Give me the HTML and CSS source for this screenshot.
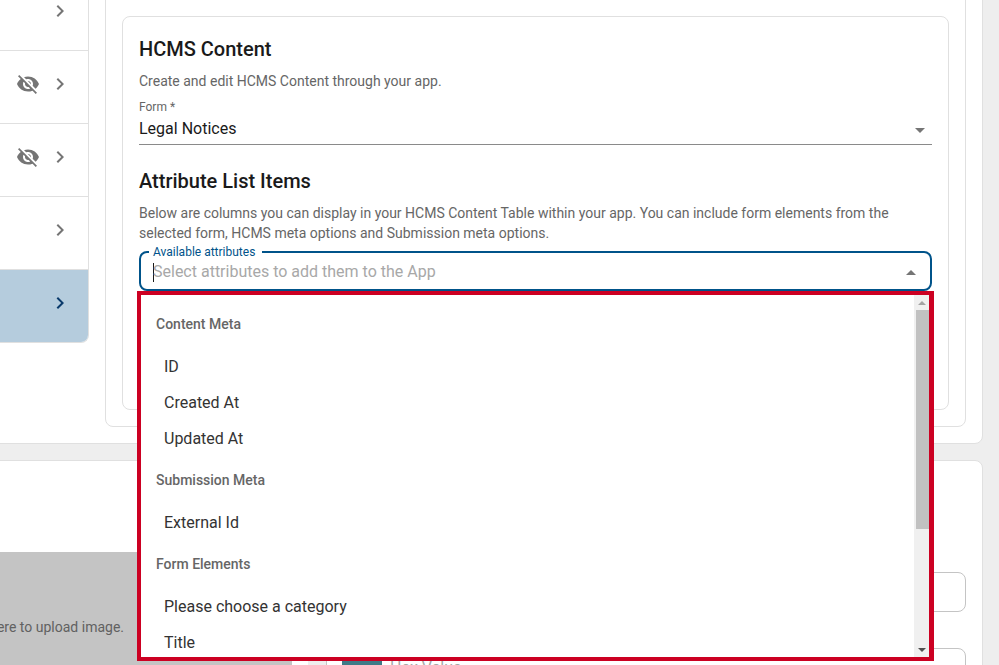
FILE: index.html
```html
<!DOCTYPE html>
<html lang="en">
<head>
<meta charset="utf-8">
<title>HCMS Content</title>
<link rel="stylesheet" href="styles.css">
</head>
<body>
<div class="page">
  <section class="card card-top">
    <nav class="list">
      <div class="row row-first">
        <svg class="chev" viewBox="0 0 24 24"><path d="M10 6 8.59 7.41 13.17 12l-4.58 4.59L10 18l6-6z"/></svg>
      </div>
      <div class="row">
        <svg class="eye" viewBox="0 0 24 24"><path d="M12 7c2.76 0 5 2.24 5 5 0 .65-.13 1.26-.36 1.83l2.92 2.92c1.51-1.26 2.7-2.89 3.43-4.75-1.73-4.39-6-7.5-11-7.5-1.4 0-2.74.25-3.98.7l2.16 2.16C10.74 7.13 11.35 7 12 7zM2 4.27l2.28 2.28.46.46C3.08 8.3 1.78 10.02 1 12c1.73 4.39 6 7.5 11 7.5 1.55 0 3.03-.3 4.38-.84l.42.42L19.73 22 21 20.73 3.27 3 2 4.27zM7.53 9.8l1.55 1.55c-.05.21-.08.43-.08.65 0 1.66 1.34 3 3 3 .22 0 .44-.03.65-.08l1.55 1.55c-.67.33-1.41.53-2.2.53-2.76 0-5-2.24-5-5 0-.79.2-1.53.53-2.2zm4.31-.78l3.15 3.15.02-.16c0-1.66-1.34-3-3-3l-.17.01z"/></svg>
        <svg class="chev" viewBox="0 0 24 24"><path d="M10 6 8.59 7.41 13.17 12l-4.58 4.59L10 18l6-6z"/></svg>
      </div>
      <div class="row">
        <svg class="eye" viewBox="0 0 24 24"><path d="M12 7c2.76 0 5 2.24 5 5 0 .65-.13 1.26-.36 1.83l2.92 2.92c1.51-1.26 2.7-2.89 3.43-4.75-1.73-4.39-6-7.5-11-7.5-1.4 0-2.74.25-3.98.7l2.16 2.16C10.74 7.13 11.35 7 12 7zM2 4.27l2.28 2.28.46.46C3.08 8.3 1.78 10.02 1 12c1.73 4.39 6 7.5 11 7.5 1.55 0 3.03-.3 4.38-.84l.42.42L19.73 22 21 20.73 3.27 3 2 4.27zM7.53 9.8l1.55 1.55c-.05.21-.08.43-.08.65 0 1.66 1.34 3 3 3 .22 0 .44-.03.65-.08l1.55 1.55c-.67.33-1.41.53-2.2.53-2.76 0-5-2.24-5-5 0-.79.2-1.53.53-2.2zm4.31-.78l3.15 3.15.02-.16c0-1.66-1.34-3-3-3l-.17.01z"/></svg>
        <svg class="chev" viewBox="0 0 24 24"><path d="M10 6 8.59 7.41 13.17 12l-4.58 4.59L10 18l6-6z"/></svg>
      </div>
      <div class="row">
        <svg class="chev" viewBox="0 0 24 24"><path d="M10 6 8.59 7.41 13.17 12l-4.58 4.59L10 18l6-6z"/></svg>
      </div>
      <div class="row row-selected">
        <svg class="chev" viewBox="0 0 24 24"><path d="M10 6 8.59 7.41 13.17 12l-4.58 4.59L10 18l6-6z"/></svg>
      </div>
    </nav>

    <div class="panel">
      <div class="inner">
        <h2 class="title">HCMS Content</h2>
        <p class="help help-first">Create and edit HCMS Content through your app.</p>
        <div class="select">
          <div class="select-label">Form *</div>
          <div class="select-value">
            <span>Legal Notices</span>
            <svg class="tri" viewBox="0 0 10 5"><path d="M0 0h10L5 5z"/></svg>
          </div>
        </div>
        <h2 class="title title-second">Attribute List Items</h2>
        <p class="help help-first">Below are columns you can display in your HCMS Content Table within your app. You can include form elements from the selected form, HCMS meta options and Submission meta options.</p>
        <div class="auto">
          <span class="auto-label">Available attributes</span>
          <span class="caret"></span>
          <span class="placeholder">Select attributes to add them to the App</span>
          <svg class="tri" viewBox="0 0 10 5"><path d="M5 0l5 5H0z"/></svg>
          <div class="menu">
            <div class="menu-scroll">
              <div class="group">Content Meta</div>
              <div class="item">ID</div>
              <div class="item">Created At</div>
              <div class="item">Updated At</div>
              <div class="group">Submission Meta</div>
              <div class="item">External Id</div>
              <div class="group">Form Elements</div>
              <div class="item">Please choose a category</div>
              <div class="item">Title</div>
            </div>
            <div class="bar">
              <div class="bar-btn"><svg class="bar-arrow" viewBox="0 0 8 4"><path d="M4 0l4 4H0z"/></svg></div>
              <div class="bar-thumb"></div>
              <div class="bar-track"></div>
              <div class="bar-btn"><svg class="bar-arrow bar-arrow-down" viewBox="0 0 8 4"><path d="M0 0h8L4 4z"/></svg></div>
            </div>
          </div>
        </div>
      </div>
    </div>
  </section>

  <section class="card card-bottom">
    <div class="upload"><span class="upload-text">Click here to upload image.</span></div>
    <div class="fields">
      <div class="field-row">
        <div class="field"></div>
      </div>
      <div class="field-row field-row-hex">
        <div class="tab"></div>
        <div class="field field-hex">
          <span class="swatch"></span>
          <span class="hex-text">Hex Value</span>
        </div>
      </div>
    </div>
  </section>
</div>
</body>
</html>
```
FILE: styles.css
```css
* { box-sizing: border-box; }
html, body { margin: 0; height: 665px; overflow: hidden; background: #eeeeee; }
body { font-family: Roboto, "Liberation Sans", sans-serif; color: #1a1a1a; }

.page { display: flex; flex-direction: column; gap: 16px; margin: -18px 0 0 -40px; width: 1023px; }
.card { background: #fff; border: 1px solid #e0e0e0; border-radius: 0 0 8px 8px; }
.card-top { display: grid; grid-template-columns: 128px 1fr; column-gap: 16px; padding: 0 16px 16px 0; }
.card-bottom { display: grid; grid-template-columns: 331px 1fr; column-gap: 16px; padding: 0 16px 0 0; border-radius: 8px 8px 0 0; height: 220px; overflow: hidden; flex: none; }

/* left list */
.list { align-self: start; border-right: 1px solid #e0e0e0; border-bottom: 1px solid #e0e0e0; border-bottom-right-radius: 8px; overflow: hidden; }
.row { display: flex; justify-content: flex-end; gap: 8px; padding: 21px 16px 27px 0; border-bottom: 1px solid #e0e0e0; height: 73px; }
.row-first { padding-top: 16px; height: 68px; }
.row-selected { background: #b5ccdd; border-bottom: 0; height: 72px; padding-bottom: 27px; }
.chev, .eye { width: 24px; height: 24px; fill: #757575; flex: none; }
.row-selected .chev { fill: #0a3a6b; }

/* panels */
.panel { margin-top: 16px; padding: 16px; border: 1px solid #e0e0e0; border-radius: 0 0 8px 8px; }
.inner { height: 394px; padding: 16px 16px 0; border: 1px solid #e0e0e0; border-radius: 8px; }

.title { margin: 0; font-size: 20px; line-height: 32px; font-weight: 500; color: #1a1a1a; }
.title-second { margin-top: 20px; }
.help { margin: 0; font-size: 14px; line-height: 20px; color: #666; }
.help-first { margin-top: 6px; }

.select { margin-top: 8px; border-bottom: 1px solid #8a8a8a; padding-bottom: 3px; }
.select-label { font-size: 12px; line-height: 16px; color: #666; }
.select-value { display: flex; align-items: center; justify-content: space-between; font-size: 16px; line-height: 24px; color: #1a1a1a; margin-top: 2px; padding-right: 7px; }
.select-value .tri { margin-top: 2px; }
.tri { width: 10px; height: 5px; fill: #757575; flex: none; }

/* autocomplete */
.auto { position: relative; display: flex; align-items: center; height: 40px; margin-top: 8px; padding: 2px 14px 0 12px; border: 2px solid #00538a; border-radius: 8px; }
.auto-label { position: absolute; top: -9px; left: 8px; padding: 0 7px 0 4px; background: #fff; font-size: 12px; line-height: 16px; color: #00538a; }
.caret { width: 1px; height: 19px; margin-right: -1px; background: #1a1a1a; flex: none; }
.placeholder { flex: 1; font-size: 16px; line-height: 24px; color: #a8a8a8; }

/* open menu */
.menu { position: absolute; top: 38px; left: -4px; right: -4px; height: 370px; display: flex; background: #fff; border: 4px solid #cc0022; border-right-width: 5px; z-index: 5; }
.menu-scroll { flex: 1; padding-top: 5px; overflow: hidden; }
.group { height: 48px; padding-left: 15px; font-size: 14px; line-height: 48px; font-weight: 500; color: #666; }
.item { height: 36px; padding: 1px 0 0 23px; font-size: 16px; line-height: 36px; color: #333; }
.bar { width: 15px; display: flex; flex-direction: column; background: #f0f0f0; flex: none; }
.bar-btn { height: 15px; display: flex; align-items: center; justify-content: center; flex: none; }
.bar-arrow { width: 8px; height: 4px; fill: #a3a3a3; }
.bar-arrow-down { fill: #505050; }
.bar-thumb { height: 219px; margin-left: 2px; background: #c1c1c1; flex: none; }
.bar-track { flex: 1; }

/* lower card */
.upload { display: flex; justify-content: flex-end; margin-top: 91px; padding: 65px 168px 0 0; background: #c4c4c4; font-size: 14px; line-height: 20px; color: #616161; overflow: hidden; }
.upload-text { white-space: nowrap; flex: none; }
.fields { padding-top: 111px; display: flex; flex-direction: column; gap: 36px; }
.field-row { display: flex; }
.field-row > .field { margin-left: 18px; }
.field-row-hex > .field { margin-left: 0; }
.tab { width: 18px; height: 40px; background: #eee; border-top: 1px solid #ddd; flex: none; }
.field { flex: 1; height: 40px; border: 1px solid #c4c4c4; border-radius: 8px; }
.field-hex { display: flex; align-items: center; gap: 8px; padding-left: 15px; height: 40px; }
.swatch { width: 40px; height: 32px; background: #3f7a87; flex: none; }
.hex-text { font-size: 16px; line-height: 24px; color: #a8a8a8; }
```
